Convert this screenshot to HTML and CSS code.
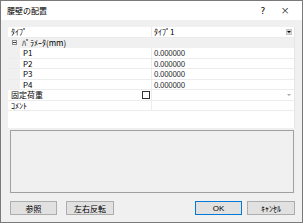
FILE: index.html
```html
<!DOCTYPE html>
<html>
<head>
<meta charset="utf-8">
<link rel="stylesheet" href="styles.css">
</head>
<body>
<div class="dlg">
  <div class="titlebar">
    <span class="title">腰壁の配置</span>
    <span class="help">?</span>
    <span class="close">×</span>
  </div>
  <div class="content">
    <div class="pg">
      <div class="pgmain">
        <div class="gridview">
          <div class="row">
            <div class="name">ﾀｲﾌﾟ</div>
            <div class="val">ﾀｲﾌﾟ1<span class="ddbtn"><span class="tri"></span></span></div>
          </div>
          <div class="row cat"><span class="minus"></span><span class="catlabel">ﾊﾟﾗﾒｰﾀ(mm)</span></div>
          <div class="row sub"><div class="indent"></div><div class="name">P1</div><div class="val num">0.000000</div></div>
          <div class="row sub"><div class="indent"></div><div class="name">P2</div><div class="val num">0.000000</div></div>
          <div class="row sub"><div class="indent"></div><div class="name">P3</div><div class="val num">0.000000</div></div>
          <div class="row sub"><div class="indent"></div><div class="name">P4</div><div class="val num">0.000000</div></div>
          <div class="row">
            <div class="name">固定荷重<span class="chk"></span></div>
            <div class="val"><span class="ddarrow"></span></div>
          </div>
          <div class="row">
            <div class="name">ｺﾒﾝﾄ</div>
            <div class="val"></div>
          </div>
        </div>
        <div class="vstrip"></div>
      </div>
      <div class="helppane"></div>
    </div>
    <div class="buttons">
      <button class="btn b1">参照</button>
      <button class="btn b2">左右反転</button>
      <span class="spacer"></span>
      <button class="btn ok">OK</button>
      <button class="btn cancel">ｷｬﾝｾﾙ</button>
    </div>
  </div>
</div>
</body>
</html>
```
FILE: styles.css
```css
html, body { margin: 0; padding: 0; }
body { width: 303px; height: 223px; overflow: hidden; }
.dlg {
  width: 303px; height: 223px; box-sizing: border-box;
  border: 1px solid #7a7a7a;
  background: #f0f0f0;
  display: flex; flex-direction: column;
  font-family: "Noto Sans CJK JP", sans-serif;
  font-size: 8px; color: #000;
}
.titlebar {
  height: 19px; background: #fff;
  display: flex; align-items: center;
  padding-left: 6px;
}
.title { flex: 1; font-size: 8px; line-height: 10px; }
.help { width: 8px; text-align: center; font-size: 9px; margin-right: 13px; font-family: "DejaVu Sans", sans-serif; }
.close { width: 10px; text-align: center; font-size: 11px; margin-right: 12px; font-family: "DejaVu Sans", sans-serif; font-weight: 300; }
.content {
  flex: 1; display: flex; flex-direction: column;
  padding: 7px 2px 0 7px;
}
.pg { height: 169px; display: flex; flex-direction: column; }
.pgmain { height: 101px; display: flex; }
.gridview { flex: 1; background: #fff; }
.vstrip { width: 5px; background: #f0f0f0; border-left: 1px solid #e6e6e6; }
.helppane {
  margin: 2px 6px 3px 2px; flex: 1;
  border: 1px solid #a0a0a0; background: #f0f0f0;
}
.row {
  height: 10.5px; box-sizing: border-box;
  border-bottom: 1px solid #ececec;
  display: flex; align-items: center;
  line-height: 9px;
}
.name {
  width: 144px; box-sizing: border-box; padding-left: 3px;
  height: 100%; display: flex; align-items: center;
  border-right: 1px solid #ececec;
}
.sub .indent { width: 12px; height: 100%; background: #f0f0f0; }
.sub .name { width: 132px; padding-left: 3px; }
.val {
  flex: 1; height: 100%; padding-left: 2px;
  display: flex; align-items: center; position: relative;
}
.num { color: #333; letter-spacing: -0.3px; }
.cat { background: #f0f0f0; border-bottom-color: #f0f0f0; }
.minus {
  width: 5px; height: 5px; box-sizing: border-box;
  border: 1px solid #8a8a8a; margin-left: 4px; margin-right: 5px;
  position: relative; background: #fff;
}
.minus::after {
  content: ""; position: absolute; left: 0px; top: 1px; width: 3px; height: 1px; background: #444;
}
.catlabel { }
.ddbtn {
  position: absolute; right: 2px; top: 2px;
  width: 6px; height: 6px; background: #d8d8d8; border: 1px solid #c4c4c4; box-sizing: border-box;
  display: flex; align-items: center; justify-content: center;
}
.tri {
  width: 0; height: 0;
  border-left: 2px solid transparent; border-right: 2px solid transparent;
  border-top: 2px solid #000;
}
.chk {
  margin-left: auto; margin-right: 1px;
  width: 8px; height: 8px; box-sizing: border-box;
  border: 1px solid #333; background: #fff;
}
.ddarrow {
  position: absolute; right: 3px; top: 4px;
  width: 0; height: 0;
  border-left: 2px solid transparent; border-right: 2px solid transparent;
  border-top: 2px solid #a8a8a8;
}
.buttons {
  display: flex; margin-top: 5px; padding: 0 5px 0 2px;
}
.btn {
  height: 14px; box-sizing: border-box; padding: 0;
  background: #e1e1e1; border: 1px solid #adadad;
  font-family: "Noto Sans CJK JP", sans-serif; font-size: 8px; line-height: 11px; color: #000;
}
.b1 { width: 47px; }
.b2 { width: 48px; margin-left: 9px; }
.spacer { flex: 1; }
.ok { width: 47px; border-color: #0078d7; font-family: "Liberation Sans", sans-serif; }
.cancel { width: 48px; margin-left: 5px; }
```
